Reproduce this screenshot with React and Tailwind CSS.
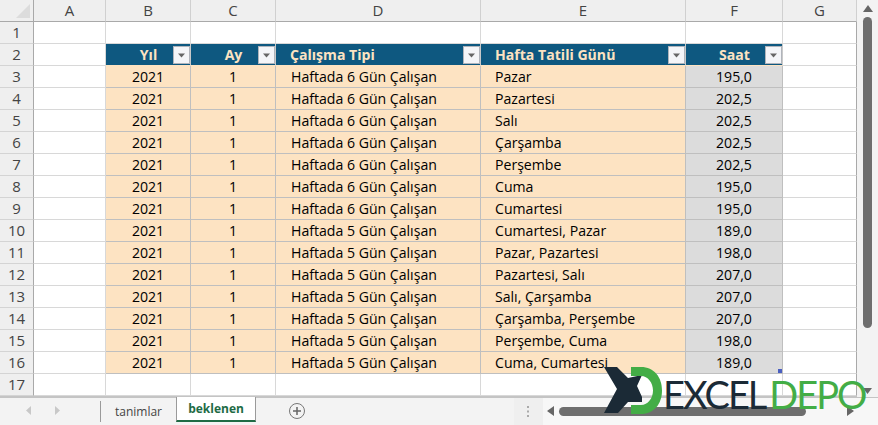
const cols = [
  { l: "A", w: 72 },
  { l: "B", w: 85 },
  { l: "C", w: 85 },
  { l: "D", w: 205 },
  { l: "E", w: 205 },
  { l: "F", w: 97 },
  { l: "G", w: 74 },
];
const rows = [
  ["Haftada 6 Gün Çalışan", "Pazar", "195,0"],
  ["Haftada 6 Gün Çalışan", "Pazartesi", "202,5"],
  ["Haftada 6 Gün Çalışan", "Salı", "202,5"],
  ["Haftada 6 Gün Çalışan", "Çarşamba", "202,5"],
  ["Haftada 6 Gün Çalışan", "Perşembe", "202,5"],
  ["Haftada 6 Gün Çalışan", "Cuma", "195,0"],
  ["Haftada 6 Gün Çalışan", "Cumartesi", "195,0"],
  ["Haftada 5 Gün Çalışan", "Cumartesi, Pazar", "189,0"],
  ["Haftada 5 Gün Çalışan", "Pazar, Pazartesi", "198,0"],
  ["Haftada 5 Gün Çalışan", "Pazartesi, Salı", "207,0"],
  ["Haftada 5 Gün Çalışan", "Salı, Çarşamba", "207,0"],
  ["Haftada 5 Gün Çalışan", "Çarşamba, Perşembe", "207,0"],
  ["Haftada 5 Gün Çalışan", "Perşembe, Cuma", "198,0"],
  ["Haftada 5 Gün Çalışan", "Cuma, Cumartesi", "189,0"],
];
const gridCols = "grid grid-cols-[34px_72px_85px_85px_205px_205px_97px_74px]";
const rowNum = "flex h-[22px] items-center justify-center border-r border-b border-r-[#a9a9a9] border-b-[#d4d4d4] bg-[#efefef] text-[15px] text-[#444]";
const empty = "h-[22px] border-r border-b border-[#d8d8d8] bg-white";
const emptyLast = "h-[22px] border-r border-b border-r-[#a9a9a9] border-b-[#d8d8d8] bg-white";
const data = "flex h-[22px] items-center border-r border-b border-[#bfbfbf] text-[14.1px] text-black";

function Filter() {
  return (
    <span className="absolute right-0 top-[2px] flex h-[18px] w-[17px] items-center justify-center border border-[#b0b4bb] bg-[#f4f5f8]">
      <svg width="9" height="5" viewBox="0 0 9 5"><path d="M1 0.5h7L4.5 4.5z" fill="#666" /></svg>
    </span>
  );
}
function Head({ children, left }) {
  return (
    <div className={`relative flex h-[22px] items-center border-r border-b border-r-[#c9c9c9] border-b-[#fde3c2] bg-[#0e5880] text-[14.1px] font-bold text-[#fde3c2] ${left ? "pl-[14px]" : "justify-center pl-[1px]"}`}>
      {children}
      <Filter />
    </div>
  );
}

export default function App() {
  return (
    <div className="relative flex h-[425px] w-[878px] flex-col overflow-hidden bg-white font-['Open_Sans','Noto_Sans',sans-serif]">
      <div className="flex h-[397px] shrink-0">
        <div className="w-[857px] shrink-0 overflow-hidden border-b border-b-[#c4c4c4]">
          <div className={gridCols}>
            <div className="flex h-[22px] items-end justify-end border-r border-b border-[#a9a9a9] bg-[#efefef] pb-[3px] pr-[3px]">
              <svg width="14" height="14" viewBox="0 0 14 14"><path d="M14 0v14H0z" fill="#dcdcdc" /></svg>
            </div>
            {cols.map((c) => (
              <div key={c.l} className="flex h-[22px] items-center justify-center border-r border-b border-r-[#d0d0d0] border-b-[#a9a9a9] bg-[#efefef] text-[15px] text-[#444]">{c.l}</div>
            ))}
            <div className={rowNum}>1</div>
            {cols.map((c) => <div key={c.l} className={c.l === "G" ? emptyLast : empty} />)}
            <div className={rowNum}>2</div>
            <div className={empty} />
            <Head>Yıl</Head>
            <Head>Ay</Head>
            <Head left>Çalışma Tipi</Head>
            <Head left>Hafta Tatili Günü</Head>
            <Head>Saat</Head>
            <div className={emptyLast} />
            {rows.map((r, i) => [
              <div key={`n${i}`} className={rowNum}>{i + 3}</div>,
              <div key={`a${i}`} className={empty} />,
              <div key={`b${i}`} className={`${data} justify-center bg-[#fde3c2]`}>2021</div>,
              <div key={`c${i}`} className={`${data} justify-center bg-[#fde3c2]`}>1</div>,
              <div key={`d${i}`} className={`${data} bg-[#fde3c2] pl-[15px]`}>{r[0]}</div>,
              <div key={`e${i}`} className={`${data} bg-[#fde3c2] pl-[14px]`}>{r[1]}</div>,
              <div key={`f${i}`} className={`${data} relative justify-center bg-[#dcdcdc]`}>
                {r[2]}
                {i === 13 && <span className="absolute bottom-0 right-0 h-[4px] w-[4px] bg-[#4a5fc1]" />}
              </div>,
              <div key={`g${i}`} className={emptyLast} />,
            ])}
            <div className={rowNum}>17</div>
            {cols.map((c) => <div key={c.l} className={c.l === "G" ? emptyLast : empty} />)}
          </div>
        </div>
        <div className="flex w-[21px] shrink-0 flex-col items-center bg-[#f3f3f3] pb-[3px] pt-[5px]">
          <svg width="10" height="7" viewBox="0 0 10 7"><path d="M5 0l5 7H0z" fill="#666" /></svg>
          <div className="mb-auto mt-[5px] h-[311px] w-[9px] rounded-[5px] bg-[#6e6e6e]" />
          <svg width="9" height="6" viewBox="0 0 9 6"><path d="M0 0h9L4.5 6z" fill="#666" /></svg>
        </div>
      </div>
      <div className="flex h-[28px] items-stretch border-t border-[#c4c4c4] bg-[#f3f3f3]">
        <div className="flex w-[100px] items-center gap-[24px] pb-[2px] pl-[26px]">
          <svg width="5" height="9" viewBox="0 0 5 9"><path d="M5 0v9L0 4.5z" fill="#c8c8c8" /></svg>
          <svg width="5" height="9" viewBox="0 0 5 9"><path d="M0 0v9l5-4.5z" fill="#c8c8c8" /></svg>
        </div>
        <div className="my-[3px] flex w-[76px] items-center justify-center border-l border-[#9a9a9a] text-[12px] text-[#444]">tanimlar</div>
        <div className="-mt-px mb-[3px] flex w-[80px] items-center justify-center border-x border-[#9a9a9a] border-b-2 border-b-[#1e6b45] bg-white text-[12px] font-bold text-[#1e6b45]">beklenen</div>
        <div className="flex w-[82px] items-center justify-center pb-[2px]">
          <span className="flex h-[16px] w-[16px] items-center justify-center rounded-full border border-[#777]">
            <svg width="10" height="10" viewBox="0 0 10 10"><path d="M5 1v8M1 5h8" stroke="#666" strokeWidth="1.5" /></svg>
          </span>
        </div>
        <div className="ml-[176px] flex w-[29px] items-center justify-center bg-[#efefef] pb-[1px]">
          <svg width="3" height="11" viewBox="0 0 3 11"><path d="M0 0h2v2H0zM0 4.500h2v2H0zM0 9h2v2H0z" fill="#aaa" /></svg>
        </div>
        <div className="flex flex-1 items-center bg-[#f7f7f7] pb-[1px] pl-[4px] pr-[24px]">
          <svg width="7" height="10" viewBox="0 0 7 10"><path d="M7 0v10L0 5z" fill="#666" /></svg>
          <div className="ml-[5px] h-[9px] w-[247px] rounded-[5px] bg-[#6e6e6e]" />
          <svg className="ml-auto" width="7" height="10" viewBox="0 0 7 10"><path d="M0 0v10l7-5z" fill="#666" /></svg>
        </div>
      </div>

      <div className="absolute left-[604px] top-[367px] flex h-[47px] items-center">
        <svg className="shrink-0" width="60" height="47" viewBox="0 0 60 47">
          <path d="M0 0H13L24 11L38 8L33 19L38 30V35H24L14 46H0L13 22Z" fill="#1b2a36" />
          <path d="M27 0H37C50 0 58 10 58 23.500S50 47 37 47H27V38H37C44 38 49 31 49 23.500S44 9 37 9H27Z" fill="#43ad46" />
        </svg>
        <span className="mt-[6px] -ml-[1px] text-[38px] leading-none tracking-[-2px] text-[#1b2a36] font-['Lato',sans-serif]">EXCEL</span>
        <span className="mt-[6px] ml-[4px] text-[38px] leading-none tracking-[-2px] text-[#43ad46] font-['Lato',sans-serif]">DEPO</span>
      </div>
    </div>
  );
}
